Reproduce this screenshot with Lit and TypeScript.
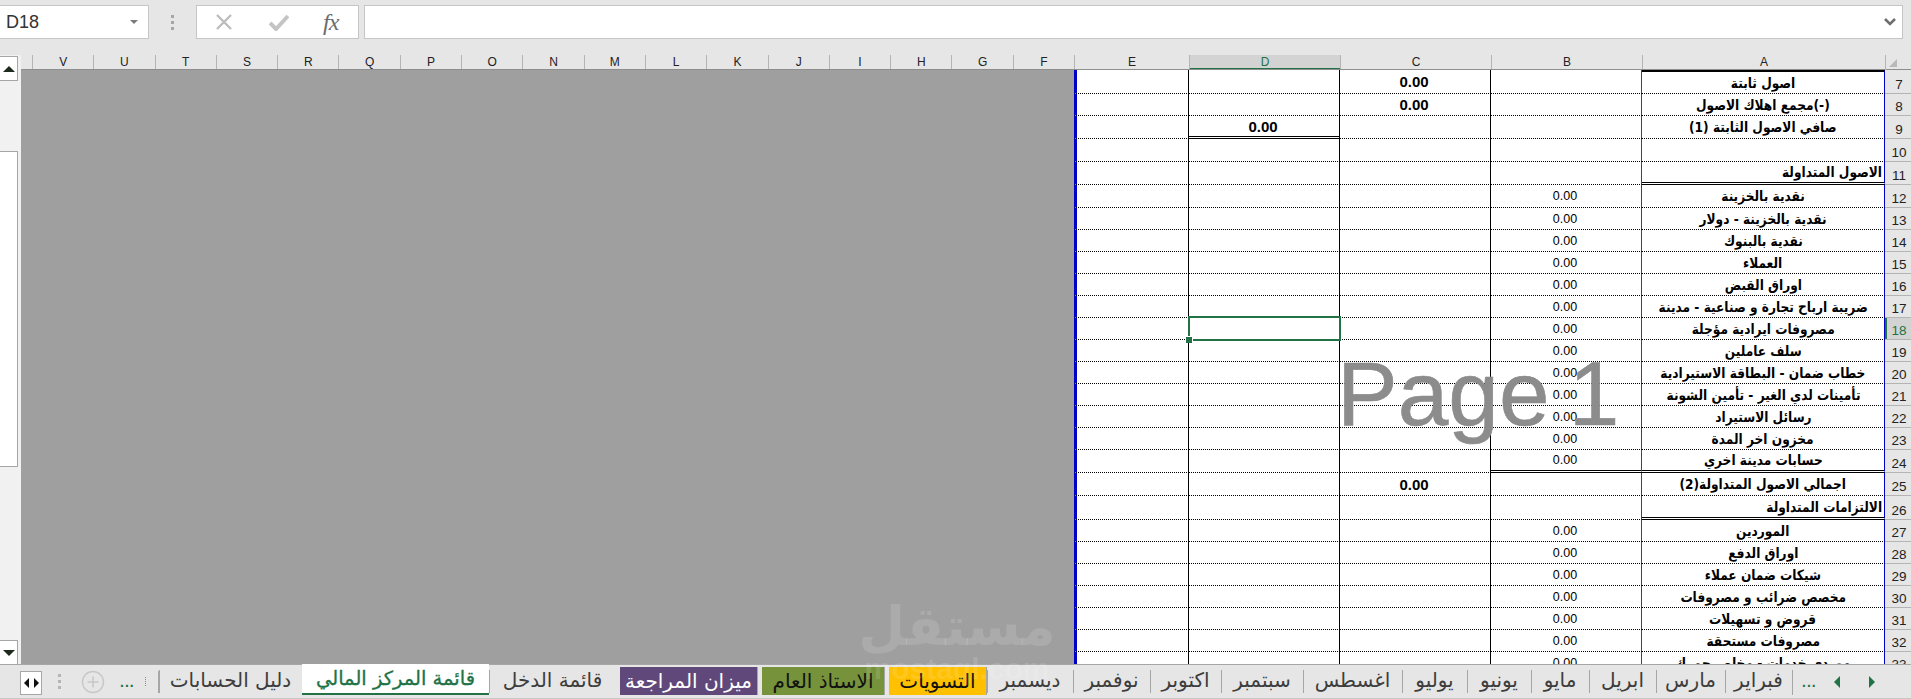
import { LitElement, html, css } from 'lit';
import { customElement } from 'lit/decorators.js';

type Row = {
  n: number;
  h: number;
  a?: string;
  b?: string;
  c?: string;
  d?: string;
  side?: boolean; // section title, pushed to the right of column A
  dbl?: string; // columns with a double line at the bottom
};

const ROWS: Row[] = [
  { n: 7, h: 24, a: 'اصول ثابتة', c: '0.00' },
  { n: 8, h: 22, a: '(-)مجمع اهلاك الاصول', c: '0.00' },
  { n: 9, h: 23, a: 'صافي الاصول الثابتة (1)', d: '0.00', dbl: 'd' },
  { n: 10, h: 23 },
  { n: 11, h: 23, a: 'الاصول المتداولة', side: true, dbl: 'a' },
  { n: 12, h: 23, a: 'نقدية بالخزينة', b: '0.00' },
  { n: 13, h: 22, a: 'نقدية بالخزينة - دولار', b: '0.00' },
  { n: 14, h: 22, a: 'نقدية بالبنوك', b: '0.00' },
  { n: 15, h: 22, a: 'العملاء', b: '0.00' },
  { n: 16, h: 22, a: 'اوراق القبض', b: '0.00' },
  { n: 17, h: 22, a: 'ضريبة ارباح تجارة و صناعية - مدينة', b: '0.00' },
  { n: 18, h: 22, a: 'مصروفات ايرادية مؤجلة', b: '0.00' },
  { n: 19, h: 22, a: 'سلف عاملين', b: '0.00' },
  { n: 20, h: 22, a: 'خطاب ضمان - البطاقة الاستيرادية', b: '0.00' },
  { n: 21, h: 22, a: 'تأمينات لدي الغير - تأمين الشونة', b: '0.00' },
  { n: 22, h: 22, a: 'رسائل الاستيراد', b: '0.00' },
  { n: 23, h: 22, a: 'مخزون اخر المدة', b: '0.00' },
  { n: 24, h: 23, a: 'حسابات مدينة اخري', b: '0.00', dbl: 'ab' },
  { n: 25, h: 23, a: 'اجمالي الاصول المتداولة(2)', c: '0.00' },
  { n: 26, h: 24, a: 'الالتزامات المتداولة', side: true, dbl: 'a' },
  { n: 27, h: 22, a: 'الموردين', b: '0.00' },
  { n: 28, h: 22, a: 'اوراق الدفع', b: '0.00' },
  { n: 29, h: 22, a: 'شيكات ضمان عملاء', b: '0.00' },
  { n: 30, h: 22, a: 'مخصص ضرائب و مصروفات', b: '0.00' },
  { n: 31, h: 22, a: 'قروض و تسهيلات', b: '0.00' },
  { n: 32, h: 22, a: 'مصروفات مستحقة', b: '0.00' },
  { n: 33, h: 22, a: 'موردي خدمات - مخلص جمرك', b: '0.00' },
];

const FAR_COLS = 'VUTSRQPONMLKJIHGF'.split('');

// right to left, w is the width of the tab in px
const TABS = [
  { t: 'فبراير', w: 67 },
  { t: 'مارس', w: 69 },
  { t: 'ابريل', w: 67 },
  { t: 'مايو', w: 58 },
  { t: 'يونيو', w: 64 },
  { t: 'يوليو', w: 65 },
  { t: 'اغسطس', w: 99 },
  { t: 'سبتمبر', w: 82 },
  { t: 'اكتوبر', w: 71 },
  { t: 'نوفمبر', w: 77 },
  { t: 'ديسمبر', w: 86 },
  { t: 'التسويات', w: 102, cls: 'yellow' },
  { t: 'الاستاذ العام', w: 127, cls: 'olive' },
  { t: 'ميزان المراجعة', w: 142, cls: 'purple' },
  { t: 'قائمة الدخل', w: 127 },
  { t: 'قائمة المركز المالي', w: 187, cls: 'active' },
  { t: 'دليل الحسابات', w: 143 },
];

@customElement('app-root')
export class AppRoot extends LitElement {
  static styles = css`
    :host {
      display: flex;
      flex-direction: column;
      position: relative;
      width: 1911px;
      height: 699px;
      overflow: hidden;
      background: #e6e6e6;
      font-family: 'Liberation Sans', Arial, sans-serif;
      color: #000;
    }

    /* formula bar */
    .fbar {
      display: flex;
      align-items: stretch;
      height: 34px;
      padding: 5px 0 16px;
      flex: none;
    }
    .namebox {
      width: 149px;
      box-sizing: border-box;
      display: flex;
      align-items: center;
      justify-content: space-between;
      padding: 0 10px 0 6px;
      background: #fff;
      border: 1px solid #c6c6c6;
      border-left: 0;
      font-size: 18px;
      color: #333;
    }
    .caret {
      width: 0;
      height: 0;
      border-left: 4px solid transparent;
      border-right: 4px solid transparent;
      border-top: 4px solid #7b7b7b;
    }
    .grip {
      width: 47px;
      display: flex;
      flex-direction: column;
      align-items: center;
      justify-content: center;
      gap: 3px;
    }
    .grip i {
      width: 3px;
      height: 3px;
      background: #a6a6a6;
    }
    .fbtns {
      width: 163px;
      box-sizing: border-box;
      display: flex;
      align-items: center;
      padding-left: 18px;
      background: #fff;
      border: 1px solid #c6c6c6;
    }
    .fbtns svg {
      display: block;
    }
    .fx {
      margin-left: 34px;
      font: italic 24px 'Liberation Serif', serif;
      color: #6b6b6b;
      letter-spacing: -1px;
    }
    .finput {
      flex: 1;
      margin-left: 5px;
      margin-right: 8px;
      display: flex;
      align-items: center;
      justify-content: flex-end;
      padding-right: 6px;
      background: #fff;
      border: 1px solid #c6c6c6;
    }

    /* sheet */
    .sheet {
      flex: 1;
      min-height: 0;
      display: flex;
      background: #e6e6e6;
    }
    .vscroll {
      width: 21px;
      flex: none;
      display: flex;
      flex-direction: column;
      padding-top: 1px;
      height: 610px;
      background: #f1f1f1;
      box-sizing: border-box;
    }
    .sbtn {
      width: 18px;
      height: 25px;
      box-sizing: border-box;
      background: #fff;
      border: 1px solid #a6a6a6;
      border-left: 0;
      display: flex;
      align-items: center;
      justify-content: center;
      flex: none;
    }
    .thumb {
      width: 18px;
      height: 316px;
      margin-top: 70px;
      box-sizing: border-box;
      background: #fff;
      border: 1px solid #a6a6a6;
      border-left: 0;
      flex: none;
    }
    .tri-up,
    .tri-down {
      width: 0;
      height: 0;
      border-left: 6px solid transparent;
      border-right: 6px solid transparent;
    }
    .tri-up {
      border-bottom: 6px solid #1f2a1f;
    }
    .tri-down {
      border-top: 6px solid #1f2a1f;
    }
    .gap {
      flex: 1;
    }

    .main {
      flex: 1;
      min-width: 0;
      display: flex;
      flex-direction: column;
    }
    .heads {
      display: grid;
      grid-template-columns: 1053px 115px 151px 151px 151px 243px 26px;
      height: 15px;
      flex: none;
      font-size: 12px;
      line-height: 15px;
      color: #222;
      text-align: center;
    }
    .far {
      display: flex;
      padding-left: 11px;
    }
    .far span {
      flex: 1;
    }
    .heads span,
    .heads .h {
      border-left: 1px solid #b4b4b4;
      box-sizing: border-box;
    }
    .heads .sel {
      background: #d3d3d3;
      color: #217346;
      box-shadow: inset 0 -2px 0 #217346;
    }
    .corner {
      position: relative;
      border-left: 1px solid #b4b4b4;
    }
    .corner::after {
      content: '';
      position: absolute;
      left: 3px;
      bottom: 3px;
      border-left: 8px solid transparent;
      border-bottom: 8px solid #b9b9b9;
    }

    .body {
      flex: 1;
      min-height: 0;
      overflow: hidden;
      display: grid;
      grid-template-columns: 1053px 1fr;
      border-top: 1px solid #8e8e8e;
      box-sizing: border-box;
      margin-top: -1px;
    }
    .void {
      background: #9f9f9f;
    }
    .rows {
      display: flex;
      flex-direction: column;
      position: relative;
    }
    .row {
      display: grid;
      grid-template-columns: 115px 151px 151px 151px 243px 26px;
      flex: none;
      box-sizing: border-box;
    }
    .cell {
      box-sizing: border-box;
      background: #fff;
      border-bottom: 1px dotted #000;
      display: flex;
      align-items: center;
      justify-content: center;
      white-space: nowrap;
      overflow: hidden;
    }
    .cell.e {
      border-left: 3px solid #0000c8;
      border-right: 1px solid #000;
    }
    .cell.d,
    .cell.c {
      border-right: 1px solid #000;
    }
    .cell.b {
      border-right: 1px solid #444;
    }
    .cell.a {
      border-right: 1px solid #0000c8;
      direction: rtl;
      font-family: 'DejaVu Sans', sans-serif;
      font-weight: bold;
      font-size: 14px;
    }
    .cell.a .lbl {
      display: inline-block;
      flex: none;
      transform: scaleX(0.87);
    }
    .cell.a.side {
      justify-content: flex-start;
      padding-right: 2px;
    }
    .cell.a.side .lbl {
      transform-origin: right center;
    }
    .cell.a.first {
      border-top: 2px solid #000;
    }
    .cell.dbl {
      border-bottom: 3px double #000;
    }
    .num {
      font-size: 12.5px;
      padding-right: 2px;
    }
    .num.big {
      font-size: 15px;
      font-weight: bold;
    }
    .rn {
      background: #e6e6e6;
      font-size: 13.5px;
      color: #222;
      display: flex;
      align-items: flex-end;
      justify-content: center;
      padding-left: 2px;
      box-sizing: border-box;
      border-bottom: 1px solid #b4b4b4;
      line-height: 17px;
    }
    .rn.sel {
      background: #d3d3d3;
      color: #217346;
      box-shadow: inset 2px 0 0 #217346;
    }

    /* things lying over the cells */
    .cursor {
      position: absolute;
      left: 114px;
      top: 246px;
      width: 153px;
      height: 25px;
      box-sizing: border-box;
      border: 2px solid #217346;
    }
    .cursor::after {
      content: '';
      position: absolute;
      left: -4px;
      bottom: -4px;
      width: 6px;
      height: 6px;
      background: #217346;
      border: 1px solid #fff;
      border-width: 1px 1px 0 0;
    }
    .stamp {
      position: absolute;
      left: 1337px;
      top: 344px;
      font-size: 91px;
      line-height: 100px;
      color: #8c8c8c;
      white-space: nowrap;
      word-spacing: -6px;
      -webkit-text-stroke: 0.6px #8c8c8c;
    }
    .mark {
      position: absolute;
      left: 852px;
      top: 596px;
      width: 210px;
      text-align: center;
      color: rgba(255, 255, 255, 0.13);
      pointer-events: none;
      direction: rtl;
    }
    .mark b {
      display: block;
      font: bold 54px/62px 'DejaVu Sans', sans-serif;
    }
    .mark span {
      display: block;
      direction: ltr;
      margin-top: -4px;
      font: bold 30px/30px 'Liberation Sans', sans-serif;
    }

    /* sheet tabs */
    .tabbar {
      flex: none;
      height: 35px;
      box-sizing: border-box;
      border-top: 1px solid #a6a6a6;
      border-bottom: 1px solid #c6c6c6;
      display: flex;
      justify-content: flex-end;
      align-items: stretch;
      font-family: 'DejaVu Sans', sans-serif;
      background: #e6e6e6;
    }
    .tabnav {
      width: 145px;
      flex: none;
      display: flex;
      align-items: center;
      padding-left: 20px;
      box-sizing: border-box;
    }
    .navbox {
      width: 22px;
      height: 24px;
      margin-top: 2px;
      box-sizing: border-box;
      border: 1px solid #a6a6a6;
      background: #fff;
      display: grid;
      grid-template-columns: 1fr 1fr;
      align-items: center;
      justify-items: center;
    }
    .navbox span:first-child {
      border-right: 5px solid #111;
      border-top: 5px solid transparent;
      border-bottom: 5px solid transparent;
    }
    .navbox span:last-child {
      border-left: 5px solid #111;
      border-top: 5px solid transparent;
      border-bottom: 5px solid transparent;
    }
    .navgrip {
      width: 34px;
      display: flex;
      flex-direction: column;
      align-items: center;
      gap: 3px;
    }
    .navgrip i {
      width: 3px;
      height: 3px;
      background: #b5b5b5;
    }
    .plus {
      display: block;
      margin-left: 5px;
    }
    .more {
      color: #217346;
      font: bold 14px 'Liberation Sans', sans-serif;
      letter-spacing: 1px;
    }
    .more.l {
      margin-left: 15px;
    }
    .cut {
      width: 14px;
      flex: none;
      height: 22px;
      align-self: center;
      box-sizing: border-box;
      border-right: 1px solid #a6a6a6;
      position: relative;
    }
    .cut::before {
      content: '';
      position: absolute;
      left: 0;
      top: 6px;
      height: 9px;
      border-left: 1px dotted #8a8a8a;
    }
    .tabs {
      display: flex;
      flex-direction: row-reverse;
      align-items: stretch;
      flex: none;
    }
    .tab {
      box-sizing: border-box;
      direction: rtl;
      display: flex;
      align-items: center;
      justify-content: center;
      height: 30px;
      font-size: 20px;
      color: #3d3d3d;
      position: relative;
      white-space: nowrap;
    }
    .tab.plain::after {
      content: '';
      position: absolute;
      left: 0;
      top: 5px;
      bottom: 2px;
      border-left: 1px solid #a6a6a6;
    }
    .tab.yellow,
    .tab.olive,
    .tab.purple {
      margin: 2px 0 0;
      height: 28px;
      border-left: 4px solid #e6e6e6;
      border-right: 1px solid #a6a6a6;
    }
    .tab.yellow {
      background: #ffc000;
      color: #111;
    }
    .tab.olive {
      background: #76933c;
      color: #111;
    }
    .tab.purple {
      background: #60497a;
      color: #fff;
    }
    .tab.active {
      background: #fff;
      margin-top: -1px;
      height: 31px;
      color: #217346;
      font-size: 19.5px;
      -webkit-text-stroke: 0.3px #217346;
      border-bottom: 2px solid #217346;
    }
    .navs {
      width: 119px;
      flex: none;
      display: flex;
      align-items: center;
      position: relative;
      box-sizing: border-box;
    }
    .navs::before {
      content: '';
      position: absolute;
      left: 0;
      top: 5px;
      bottom: 3px;
      border-left: 1px solid #a6a6a6;
    }
    .navs .more {
      margin-left: 10px;
      width: 32px;
    }
    .arr-l,
    .arr-r {
      border-top: 6px solid transparent;
      border-bottom: 6px solid transparent;
    }
    .arr-l {
      border-right: 6px solid #217346;
    }
    .arr-r {
      border-left: 6px solid #217346;
      margin-left: 29px;
    }
  `;

  private cell(col: string, r: Row) {
    const val = (r as any)[col] as string | undefined;
    const dbl = r.dbl?.includes(col) ? ' dbl' : '';
    const big = col === 'b' ? '' : ' big';
    return html`<div class="cell ${col}${dbl}">${val ? html`<span class="num${big}">${val}</span>` : ''}</div>`;
  }

  render() {
    return html`
      <div class="fbar">
        <div class="namebox">D18<span class="caret"></span></div>
        <div class="grip"><i></i><i></i><i></i></div>
        <div class="fbtns">
          <svg width="18" height="16" viewBox="0 0 18 16">
            <path d="M2 1 L16 15 M16 1 L2 15" stroke="#bdbdbd" stroke-width="2.4" fill="none" />
          </svg>
          <svg style="margin-left:36px" width="20" height="17" viewBox="0 0 20 17">
            <path d="M1 9 L7 15 L19 2" stroke="#c4c4c4" stroke-width="4" fill="none" />
          </svg>
          <span class="fx">fx</span>
        </div>
        <div class="finput">
          <svg width="12" height="8" viewBox="0 0 12 8">
            <path d="M1 1 L6 6 L11 1" stroke="#6f6f6f" stroke-width="2.6" fill="none" />
          </svg>
        </div>
      </div>

      <div class="sheet">
        <div class="vscroll">
          <div class="sbtn"><span class="tri-up"></span></div>
          <div class="thumb"></div>
          <div class="gap"></div>
          <div class="sbtn"><span class="tri-down"></span></div>
        </div>

        <div class="main">
          <div class="heads">
            <div class="far">${FAR_COLS.map((c) => html`<span>${c}</span>`)}</div>
            <div class="h">E</div>
            <div class="h sel">D</div>
            <div class="h">C</div>
            <div class="h">B</div>
            <div class="h">A</div>
            <div class="corner"></div>
          </div>
          <div class="body">
            <div class="void"></div>
            <div class="rows">
              ${ROWS.map(
                (r) => html`
                  <div class="row" style="height:${r.h}px">
                    ${this.cell('e', r)} ${this.cell('d', r)} ${this.cell('c', r)} ${this.cell('b', r)}
                    <div class="cell a${r.side ? ' side' : ''}${r.dbl?.includes('a') ? ' dbl' : ''}${r.n === 7 ? ' first' : ''}">
                      ${r.a ? html`<span class="lbl">${r.a}</span>` : ''}
                    </div>
                    <div class="rn${r.n === 18 ? ' sel' : ''}">${r.n}</div>
                  </div>
                `,
              )}
              <div class="cursor"></div>
            </div>
          </div>
        </div>
      </div>

      <div class="tabbar">
        <div class="tabnav">
          <div class="navbox"><span></span><span></span></div>
          <div class="navgrip"><i></i><i></i><i></i></div>
          <svg class="plus" width="24" height="24" viewBox="0 0 24 24">
            <circle cx="12" cy="12" r="10.5" fill="none" stroke="#c8c8c8" stroke-width="1.4" />
            <path d="M12 6.5 V17.5 M6.5 12 H17.5" stroke="#c8c8c8" stroke-width="1.6" />
          </svg>
          <span class="more l">...</span>
        </div>
        <div class="cut"></div>
        <div class="tabs">
          ${TABS.map(
            (t) => html`<div class="tab ${t.cls ?? 'plain'}" style="width:${t.w}px">${t.t}</div>`,
          )}
        </div>
        <div class="navs">
          <span class="more">...</span>
          <span class="arr-l"></span>
          <span class="arr-r"></span>
        </div>
      </div>

      <div class="stamp">Page 1</div>
      <div class="mark"><b>مستقل</b><span>mostaql.com</span></div>
    `;
  }
}
